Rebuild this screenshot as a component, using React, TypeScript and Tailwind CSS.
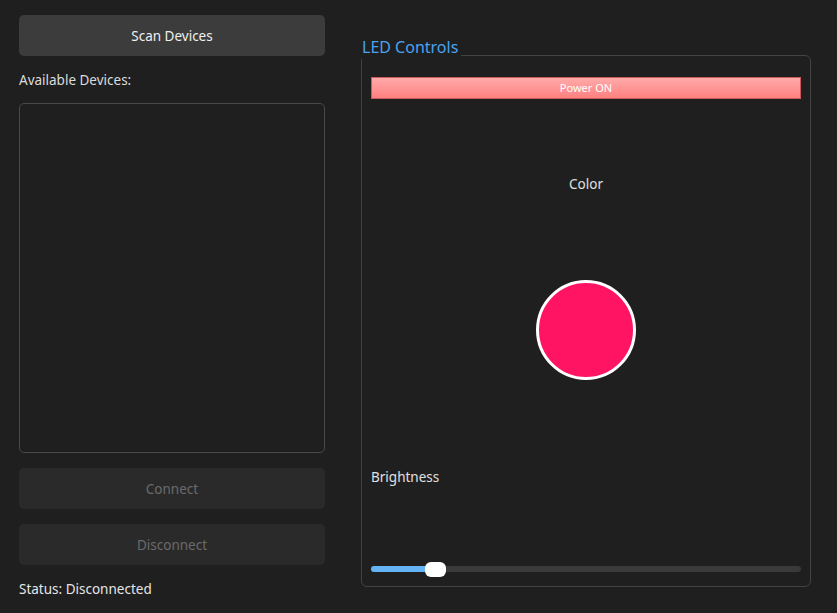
import React from "react";

const font = { fontFamily: '"Noto Sans", "Open Sans", sans-serif' };

function SideButton({ label, disabled }: { label: string; disabled?: boolean }) {
  return (
    <button
      disabled={disabled}
      className={
        disabled
          ? "h-[41px] w-full rounded-[5px] bg-[#2a2a2a] pt-[1px] text-[13.5px] text-[#6a6a6a]"
          : "h-[41px] w-full rounded-[5px] bg-[#3c3c3c] pt-[1px] text-[13.5px] text-[#f0f0f0]"
      }
    >
      {label}
    </button>
  );
}

export default function App() {
  const brightness = 15;

  return (
    <div className="flex h-[613px] w-[837px] gap-[36px] bg-[#1f1f1f] pl-[19px] pt-[15px]" style={font}>
      {/* Device panel */}
      <div className="flex w-[306px] flex-col">
        <SideButton label="Scan Devices" />
        <div className="mt-[14px] h-[20px] text-[13.5px] leading-[20px] text-[#dcdcdc]">Available Devices:</div>
        <div className="mt-[13px] h-[350px] rounded-[5px] border border-[#4a4a4a] bg-[#1f1f1f]" />
        <div className="mt-[15px]">
          <SideButton label="Connect" disabled />
        </div>
        <div className="mt-[15px]">
          <SideButton label="Disconnect" disabled />
        </div>
        <div className="mt-[14px] text-[13.5px] leading-[20px] text-[#e6e6e6]">Status: Disconnected</div>
      </div>

      {/* LED controls group */}
      <div className="relative mt-[40px] h-[532px] w-[450px]">
        <div className="absolute -top-[19px] left-[1px] bg-[#1f1f1f] pr-[3px] pb-[2px] text-[16px] leading-[22px] text-[#4aa3f0]">
          LED Controls
        </div>
        <div className="flex h-full flex-col rounded-[6px] border border-[#434343] px-[9px] pt-[21px] pb-[9px]">
          <button className="flex h-[22px] w-full shrink-0 items-center justify-center border border-[#c85a5a] bg-gradient-to-b from-[#ffaaaa] to-[#ff8080] text-[11px] leading-[14px] text-white">
            Power ON
          </button>
          <div className="mt-[75px] shrink-0 text-center text-[13.5px] leading-[20px] text-[#e0e0e0]">Color</div>
          <div className="mt-[86px] flex shrink-0 justify-center">
            <div className="h-[100px] w-[100px] rounded-full border-[3px] border-white bg-[#ff1464]" />
          </div>
          <div className="mt-[87px] shrink-0 text-[13.5px] leading-[20px] text-[#e0e0e0]">Brightness</div>
          <div className="relative mt-[75px] h-[15px] shrink-0">
            <div className="absolute top-[4px] left-0 right-0 h-[6px] rounded-full bg-[#3a3a3a]" />
            <div
              className="absolute top-[4px] left-0 h-[6px] rounded-full bg-[#64b4f5]"
              style={{ width: `${brightness * 4.3 + 5}px` }}
            />
            <div
              className="absolute top-0 h-[15px] w-[21px] rounded-[6px] bg-white"
              style={{ left: `${brightness * 4.3 - 11}px` }}
            />
          </div>
        </div>
      </div>
    </div>
  );
}
